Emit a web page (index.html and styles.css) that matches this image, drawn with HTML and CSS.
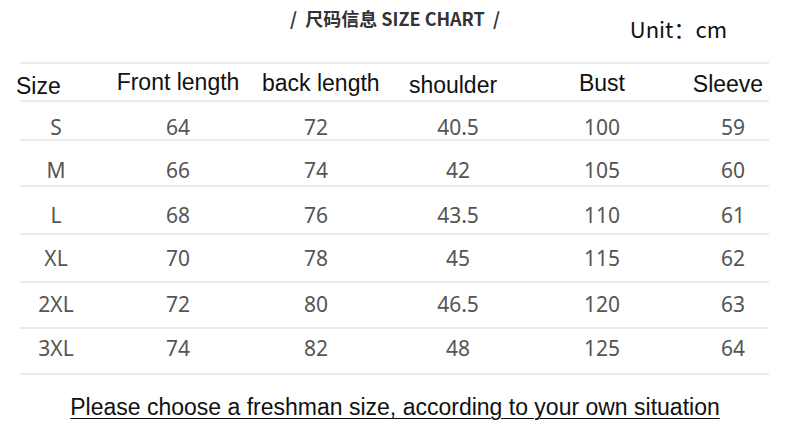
FILE: index.html
```html
<!DOCTYPE html>
<html lang="en">
<head>
<meta charset="utf-8">
<title>Size chart</title>
<link rel="stylesheet" href="styles.css">
</head>
<body>
<div class="page">
  <header class="top">
    <div class="spacer"></div>
    <div class="title">/&nbsp;&nbsp;尺码信息 SIZE CHART&nbsp;&nbsp;/</div>
    <div class="unit">Unit：cm</div>
  </header>
  <div class="table">
    <div class="row head">
      <div class="c1 h-size">Size</div>
      <div class="c2 h-front">Front length</div>
      <div class="c3 h-back">back length</div>
      <div class="c4 h-shoulder">shoulder</div>
      <div class="c5 h-bust">Bust</div>
      <div class="c6 h-sleeve">Sleeve</div>
    </div>
    <div class="row data r1">
      <div class="c1">S</div><div class="c2">64</div><div class="c3">72</div><div class="c4">40.5</div><div class="c5">100</div><div class="c6">59</div>
    </div>
    <div class="row data r2">
      <div class="c1">M</div><div class="c2">66</div><div class="c3">74</div><div class="c4">42</div><div class="c5">105</div><div class="c6">60</div>
    </div>
    <div class="row data r3">
      <div class="c1">L</div><div class="c2">68</div><div class="c3">76</div><div class="c4">43.5</div><div class="c5">110</div><div class="c6">61</div>
    </div>
    <div class="row data r4">
      <div class="c1">XL</div><div class="c2">70</div><div class="c3">78</div><div class="c4">45</div><div class="c5">115</div><div class="c6">62</div>
    </div>
    <div class="row data r5">
      <div class="c1">2XL</div><div class="c2">72</div><div class="c3">80</div><div class="c4">46.5</div><div class="c5">120</div><div class="c6">63</div>
    </div>
    <div class="row data r6">
      <div class="c1">3XL</div><div class="c2">74</div><div class="c3">82</div><div class="c4">48</div><div class="c5">125</div><div class="c6">64</div>
    </div>
  </div>
  <p class="note">Please choose a freshman size, according to your own situation</p>
</div>
</body>
</html>
```

FILE: styles.css
```css
html, body {
  margin: 0;
  padding: 0;
  background: #ffffff;
}

.page {
  width: 790px;
  height: 434px;
  overflow: hidden;
}

.top {
  height: 62px;
  display: grid;
  grid-template-columns: 1fr auto 1fr;
  align-items: start;
}

.title {
  padding-top: 7px;
  font-family: "Noto Sans CJK SC", "Noto Sans", sans-serif;
  font-weight: 700;
  font-size: 18px;
  line-height: 22px;
  color: #333333;
  white-space: nowrap;
}

.unit {
  justify-self: end;
  margin-right: 63px;
  padding-top: 15px;
  font-family: "Noto Sans CJK SC", sans-serif;
  font-size: 22px;
  line-height: 26px;
  color: #111111;
}

.table {
  margin-left: 20px;
  width: 749px;
  border-top: 2px solid #ebebeb;
}

.row {
  display: grid;
  grid-template-columns: 72px 172px 104px 180px 108px 113px;
  align-items: start;
  border-bottom: 2px solid #ebebeb;
  box-sizing: border-box;
  text-align: center;
}

.row .c6 {
  padding-left: 41px;
}

.head {
  height: 38px;
  font-family: "Liberation Sans", Arial, sans-serif;
  font-size: 23px;
  line-height: 26px;
  color: #111111;
  white-space: nowrap;
}

.head > div {
  padding-top: 6px;
}

.head .h-size {
  text-align: left;
  margin-left: -4px;
  padding-top: 9px;
}

.head .h-front { padding-top: 5px; }
.head .h-back { text-align: left; margin-left: -2px; }
.head .h-shoulder { padding-right: 10px; padding-top: 8px; }
.head .h-sleeve { padding-left: 31px; padding-top: 7px; }

.data {
  font-family: "Noto Sans", "Open Sans", sans-serif;
  font-size: 21px;
  line-height: 24px;
  color: #555555;
}

.r1 { height: 39px; }
.r2 { height: 46px; }
.r3 { height: 48px; }
.r4 { height: 48px; }
.r5 { height: 46px; }
.r6 { height: 46px; }

.r1 > div { padding-top: 13px; }
.r2 > div { padding-top: 17px; }
.r3 > div { padding-top: 16px; }
.r4 > div { padding-top: 11px; }
.r5 > div { padding-top: 9px; }
.r6 > div { padding-top: 7px; }

.note {
  margin: 19px 0 0 0;
  text-align: center;
  font-family: "Liberation Sans", Arial, sans-serif;
  font-size: 23px;
  line-height: 26px;
  color: #111111;
  text-decoration: underline;
  text-underline-offset: 3px;
  text-decoration-thickness: 1px;
}
```
